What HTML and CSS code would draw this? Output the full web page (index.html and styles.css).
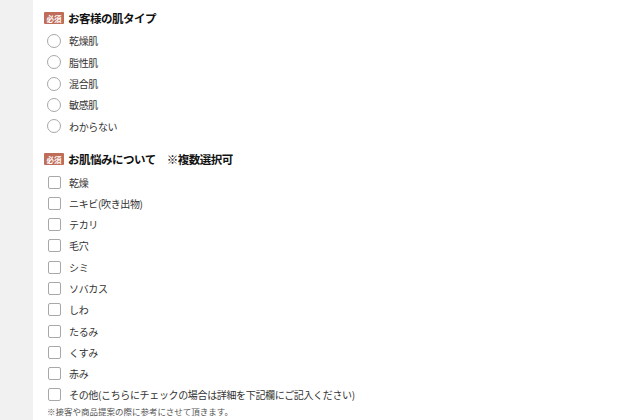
FILE: index.html
```html
<!DOCTYPE html>
<html lang="ja">
<head>
<meta charset="utf-8">
<link rel="stylesheet" href="styles.css">
</head>
<body>
<div class="page">
  <div class="side"></div>
  <main class="main">
    <section class="sec sec1">
      <h2 class="head"><span class="badge">必須</span>お客様の肌タイプ</h2>
      <ul class="list">
        <li class="row"><span class="radio"></span>乾燥肌</li>
        <li class="row"><span class="radio"></span>脂性肌</li>
        <li class="row"><span class="radio"></span>混合肌</li>
        <li class="row"><span class="radio"></span>敏感肌</li>
        <li class="row"><span class="radio"></span>わからない</li>
      </ul>
    </section>
    <section class="sec sec2">
      <h2 class="head"><span class="badge">必須</span>お肌悩みについて　※複数選択可</h2>
      <ul class="list">
        <li class="row"><span class="check"></span>乾燥</li>
        <li class="row"><span class="check"></span>ニキビ(吹き出物)</li>
        <li class="row"><span class="check"></span>テカリ</li>
        <li class="row"><span class="check"></span>毛穴</li>
        <li class="row"><span class="check"></span>シミ</li>
        <li class="row"><span class="check"></span>ソバカス</li>
        <li class="row"><span class="check"></span>しわ</li>
        <li class="row"><span class="check"></span>たるみ</li>
        <li class="row"><span class="check"></span>くすみ</li>
        <li class="row"><span class="check"></span>赤み</li>
        <li class="row"><span class="check"></span>その他(こちらにチェックの場合は詳細を下記欄にご記入ください)</li>
      </ul>
      <p class="note">※接客や商品提案の際に参考にさせて頂きます。</p>
    </section>
  </main>
</div>
</body>
</html>
```

FILE: styles.css
```css
html, body {
  margin: 0;
  padding: 0;
  background: #fff;
}
body {
  font-family: "Noto Sans CJK JP", "Noto Sans", sans-serif;
  color: #333;
}
.page {
  display: flex;
  height: 420px;
  overflow: hidden;
}
.side {
  width: 33px;
  flex: none;
  background: #f1f1f1;
}
.main {
  flex: 1;
  padding: 8px 0 0 11px;
}
.sec2 {
  margin-top: 12.3px;
}
.head {
  margin: 0;
  height: 20px;
  display: flex;
  align-items: center;
  font-size: 11.5px;
  font-weight: 700;
  color: #111;
  letter-spacing: -0.5px;
}
.badge {
  display: inline-flex;
  align-items: center;
  justify-content: center;
  width: 20px;
  height: 12px;
  margin-right: 4px;
  background: #bf6d59;
  color: #fff;
  font-size: 7.5px;
  font-weight: 700;
  border-radius: 1px;
  letter-spacing: 0;
}
.list {
  list-style: none;
  margin: 2.3px 0 0;
  padding: 0;
}
.row {
  height: 21.3px;
  display: flex;
  align-items: center;
  font-size: 10px;
  letter-spacing: -0.35px;
  color: #333;
}
.radio {
  width: 14px;
  height: 14px;
  box-sizing: border-box;
  border: 1.3px solid #a8a8a8;
  border-radius: 50%;
  margin-left: 3px;
  margin-right: 8px;
  flex: none;
}
.check {
  width: 13px;
  height: 13px;
  box-sizing: border-box;
  border: 1.2px solid #a8a8a8;
  border-radius: 2px;
  margin-left: 4px;
  margin-right: 8px;
  flex: none;
}
.note {
  margin: 0;
  height: 11px;
  line-height: 11px;
  font-size: 8.5px;
  color: #555;
  padding-left: 3px;
}
```
